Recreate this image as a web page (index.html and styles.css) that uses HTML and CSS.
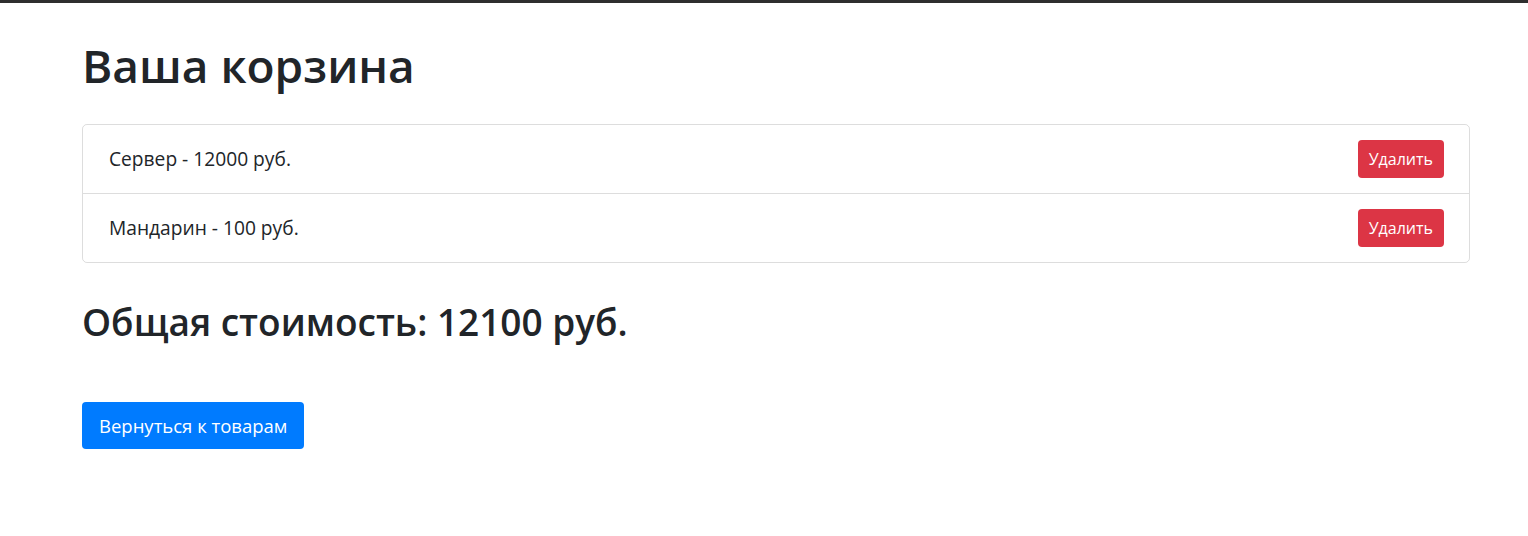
FILE: index.html
```html
<!DOCTYPE html>
<html lang="ru">
<head>
<meta charset="utf-8">
<title>Ваша корзина</title>
<link rel="stylesheet" href="styles.css">
</head>
<body>
<div class="topbar"></div>
<main class="container">
  <h1 class="title">Ваша корзина</h1>
  <ul class="cart-list">
    <li class="cart-item">
      <span class="cart-item__text">Сервер - 12000 руб.</span>
      <button class="btn btn-danger">Удалить</button>
    </li>
    <li class="cart-item">
      <span class="cart-item__text">Мандарин - 100 руб.</span>
      <button class="btn btn-danger">Удалить</button>
    </li>
  </ul>
  <h2 class="total">Общая стоимость: 12100 руб.</h2>
  <a class="btn btn-primary" href="#">Вернуться к товарам</a>
</main>
</body>
</html>
```
FILE: styles.css
```css
* { box-sizing: border-box; }
html, body {
  margin: 0;
  background: #fff;
  color: #212529;
  font-family: "Open Sans", "Noto Sans", "DejaVu Sans", sans-serif;
}
.topbar {
  height: 3px;
  background: #2e2e2e;
}
.container {
  padding: 0 58px 0 82px;
}
.title {
  margin: 32px 0 29px;
  font-size: 46px;
  font-weight: 600;
  line-height: 60px;
}
.cart-list {
  list-style: none;
  margin: 0;
  padding: 0;
  border: 1px solid rgba(0,0,0,.135);
  border-radius: 5px;
}
.cart-item {
  display: flex;
  align-items: center;
  justify-content: space-between;
  padding: 15px 25px 15px 26px;
  font-size: 19.2px;
  line-height: 24px;
}
.cart-item + .cart-item {
  border-top: 1px solid rgba(0,0,0,.135);
}
.btn {
  display: inline-block;
  border: 1px solid transparent;
  border-radius: 4px;
  color: #fff;
  font-family: inherit;
  text-decoration: none;
  cursor: pointer;
}
.btn-danger {
  background: #dc3545;
  font-size: 16px;
  height: 38px;
  line-height: 36px;
  padding: 0 10px;
}
.btn-primary {
  background: #007bff;
  font-size: 18.5px;
  height: 47px;
  line-height: 45px;
  padding: 0 16px;
}
.total {
  margin: 35px 0 56px;
  font-size: 37px;
  font-weight: 600;
  line-height: 48px;
}
```
